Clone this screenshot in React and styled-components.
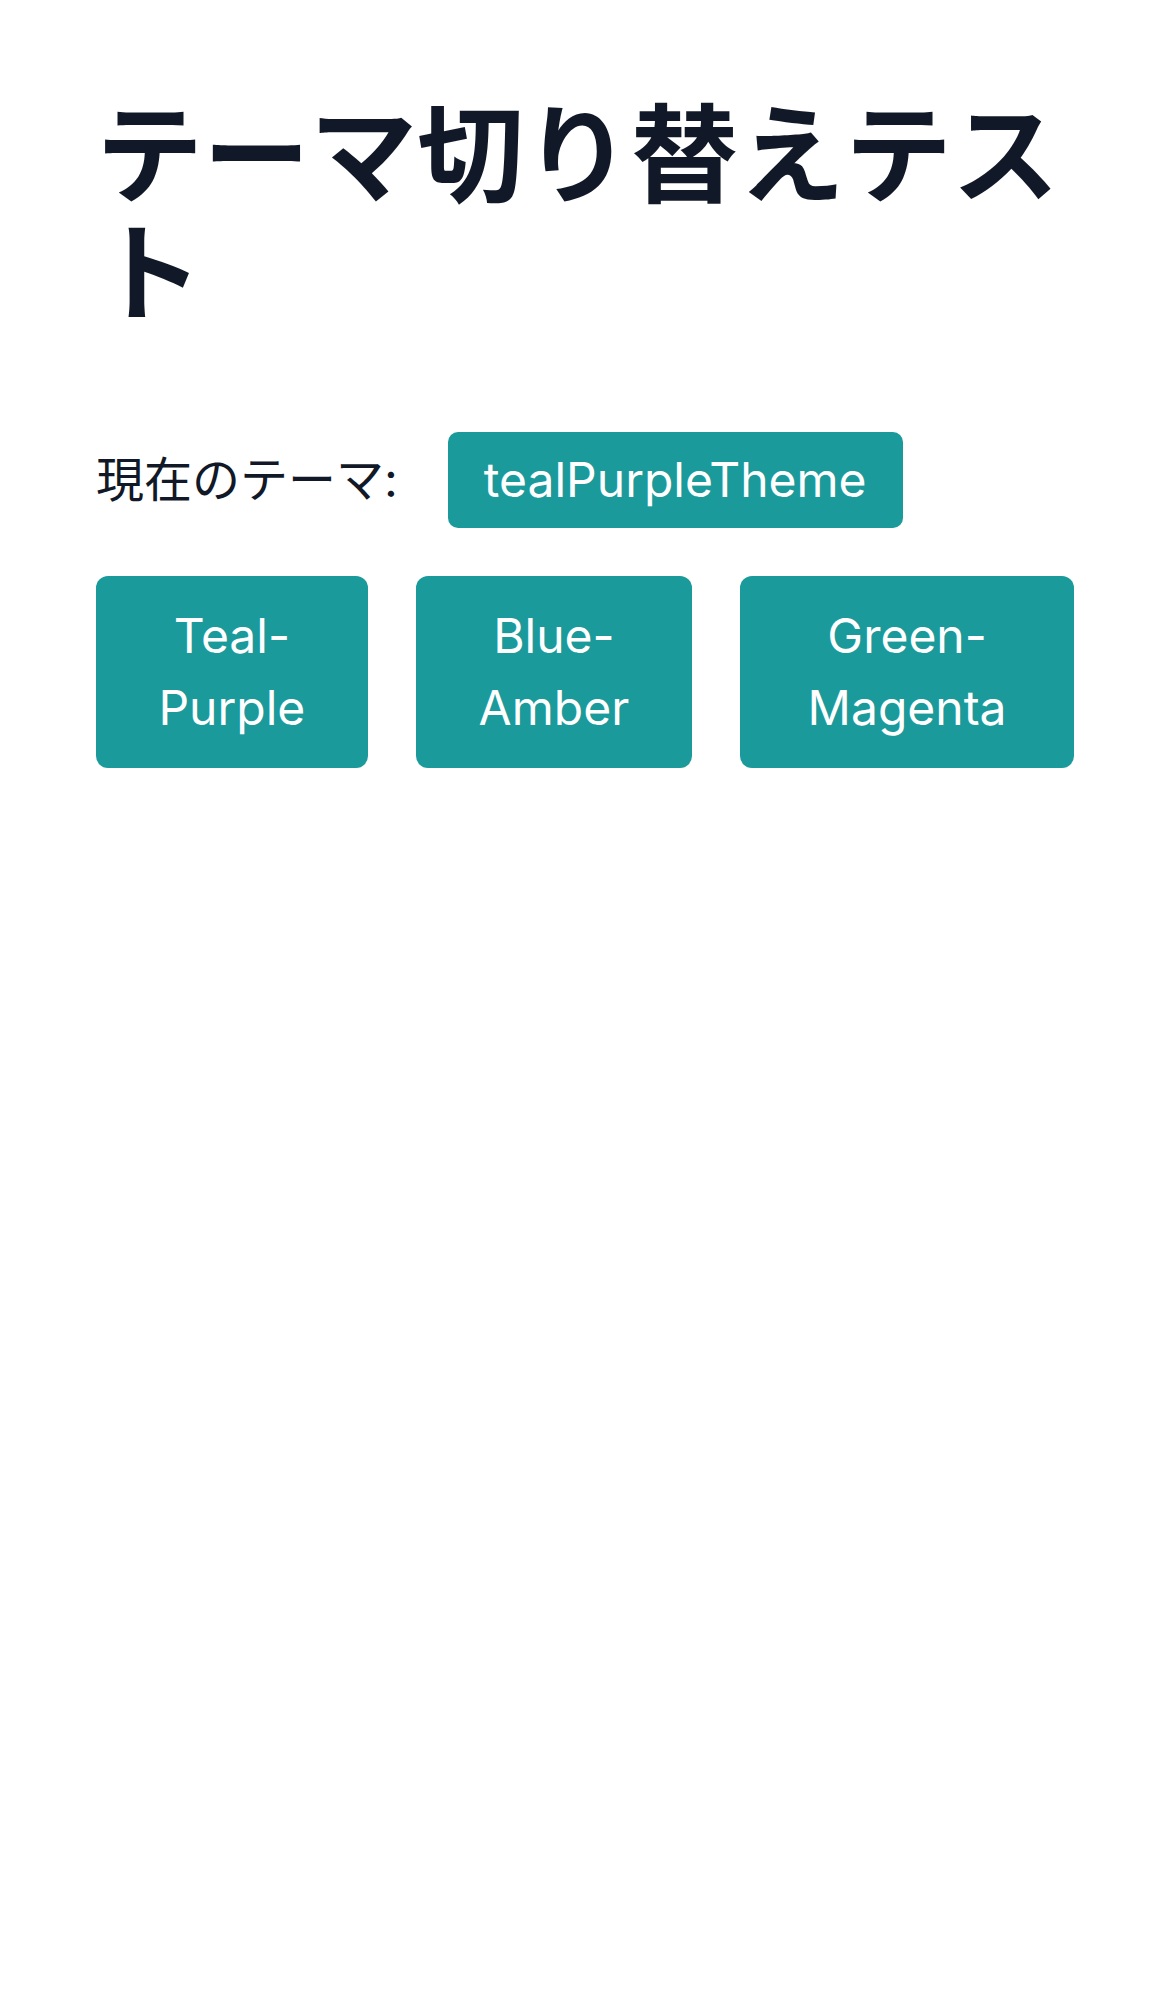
import React, { useState } from "react";
import styled, { createGlobalStyle, ThemeProvider } from "styled-components";

const themes = {
  tealPurpleTheme: { primary: "#1b9a9b", accent: "#7c3aed", text: "#111827", bg: "#ffffff" },
  blueAmberTheme: { primary: "#2563eb", accent: "#f59e0b", text: "#111827", bg: "#ffffff" },
  greenMagentaTheme: { primary: "#16a34a", accent: "#c026d3", text: "#111827", bg: "#ffffff" },
};

const GlobalStyle = createGlobalStyle`
  html, body {
    margin: 0;
    padding: 0;
    background: #ffffff;
  }
  body {
    font-family: "Inter", "Noto Sans CJK JP", sans-serif;
  }
`;

const Page = styled.div`
  padding: 96px;
  background: ${(p) => p.theme.bg};
  color: ${(p) => p.theme.text};
  min-height: 1992px;
  box-sizing: border-box;
`;

const Title = styled.h1`
  margin: 0 0 100px;
  font-size: 107px;
  line-height: 118px;
  font-weight: 700;
  color: ${(p) => p.theme.text};
`;

const CurrentRow = styled.div`
  display: flex;
  align-items: center;
  gap: 50px;
  margin-bottom: 48px;
`;

const Label = styled.span`
  font-size: 48px;
  line-height: 72px;
`;

const Badge = styled.span`
  display: inline-block;
  padding: 12px 36px;
  border-radius: 10px;
  background: ${(p) => p.theme.primary};
  color: #ffffff;
  font-size: 48px;
  line-height: 72px;
`;

const ButtonRow = styled.div`
  display: flex;
  gap: 48px;
`;

const ThemeButton = styled.button`
  padding: 24px 50px;
  border: none;
  border-radius: 12px;
  background: ${(p) => p.theme.primary};
  color: #ffffff;
  font-family: inherit;
  font-size: 48px;
  line-height: 72px;
  text-align: center;
  cursor: pointer;
`;

export default function App() {
  const [current, setCurrent] = useState("tealPurpleTheme");

  const options = [
    { key: "tealPurpleTheme", label: "Teal-Purple" },
    { key: "blueAmberTheme", label: "Blue-Amber" },
    { key: "greenMagentaTheme", label: "Green-Magenta" },
  ];

  return (
    <ThemeProvider theme={themes[current]}>
      <GlobalStyle />
      <Page>
        <Title>テーマ切り替えテスト</Title>
        <CurrentRow>
          <Label>現在のテーマ:</Label>
          <Badge>{current}</Badge>
        </CurrentRow>
        <ButtonRow>
          {options.map((o) => (
            <ThemeButton key={o.key} onClick={() => setCurrent(o.key)}>
              {o.label}
            </ThemeButton>
          ))}
        </ButtonRow>
      </Page>
    </ThemeProvider>
  );
}
